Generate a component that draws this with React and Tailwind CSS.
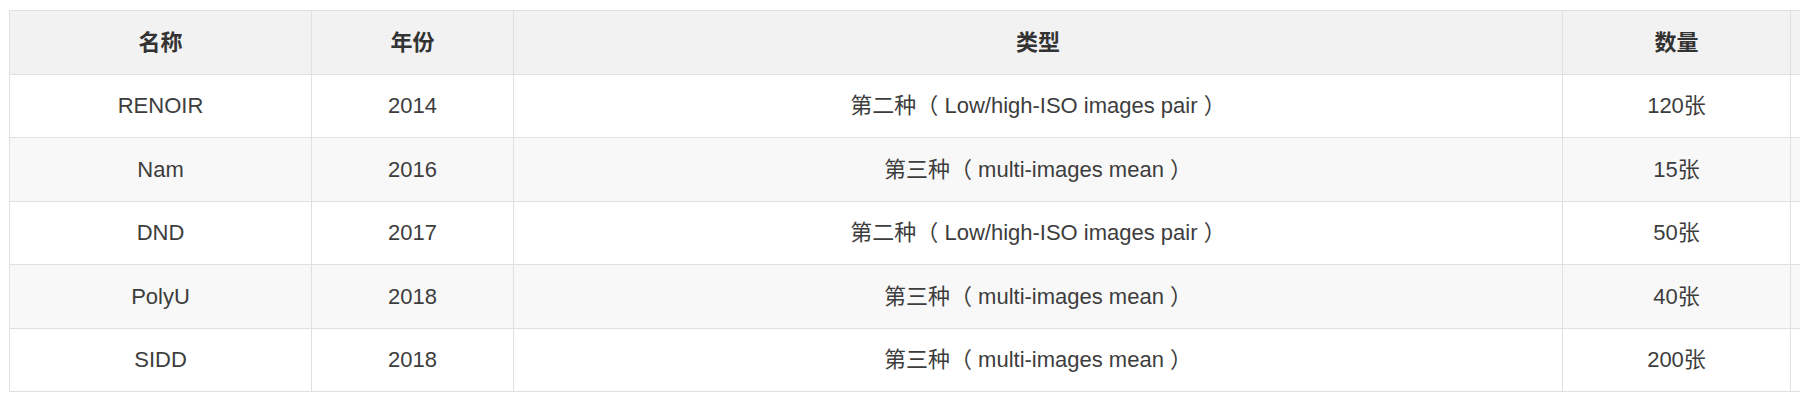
const rows = [
  { name: "RENOIR", year: "2014", type: "第二种（ Low/high-ISO images pair ）", count: "120张" },
  { name: "Nam", year: "2016", type: "第三种（ multi-images mean ）", count: "15张" },
  { name: "DND", year: "2017", type: "第二种（ Low/high-ISO images pair ）", count: "50张" },
  { name: "PolyU", year: "2018", type: "第三种（ multi-images mean ）", count: "40张" },
  { name: "SIDD", year: "2018", type: "第三种（ multi-images mean ）", count: "200张" },
];

const cell = "h-[63.5px] border border-[#e0e0e0] text-center align-middle p-0";

export default function App() {
  return (
    <div
      className="w-[1807px] h-[404px] bg-white pt-[10px] pl-[9px] pr-[8px]"
      style={{ fontFamily: '"Liberation Sans", "Noto Sans CJK SC", Arial, sans-serif' }}
    >
      <table className="table-fixed border-collapse w-[1790px] text-[22px] text-[#3d3d3d]">
        <colgroup>
          <col className="w-[302px]" />
          <col className="w-[202px]" />
          <col className="w-[1049px]" />
          <col className="w-[228px]" />
          <col className="w-[9px]" />
        </colgroup>
        <thead>
          <tr className="bg-[#f2f2f2] text-[#333]">
            <th className={`${cell} font-bold`}>名称</th>
            <th className={`${cell} font-bold`}>年份</th>
            <th className={`${cell} font-bold`}>类型</th>
            <th className={`${cell} font-bold`}>数量</th>
            <th className={`${cell} border-r-0`}></th>
          </tr>
        </thead>
        <tbody>
          {rows.map((r, i) => (
            <tr key={r.name} className={i % 2 === 1 ? "bg-[#f8f8f8]" : "bg-white"}>
              <td className={cell}>{r.name}</td>
              <td className={cell}>{r.year}</td>
              <td className={cell}>{r.type}</td>
              <td className={cell}>{r.count}</td>
              <td className={`${cell} border-r-0`}></td>
            </tr>
          ))}
        </tbody>
      </table>
    </div>
  );
}
